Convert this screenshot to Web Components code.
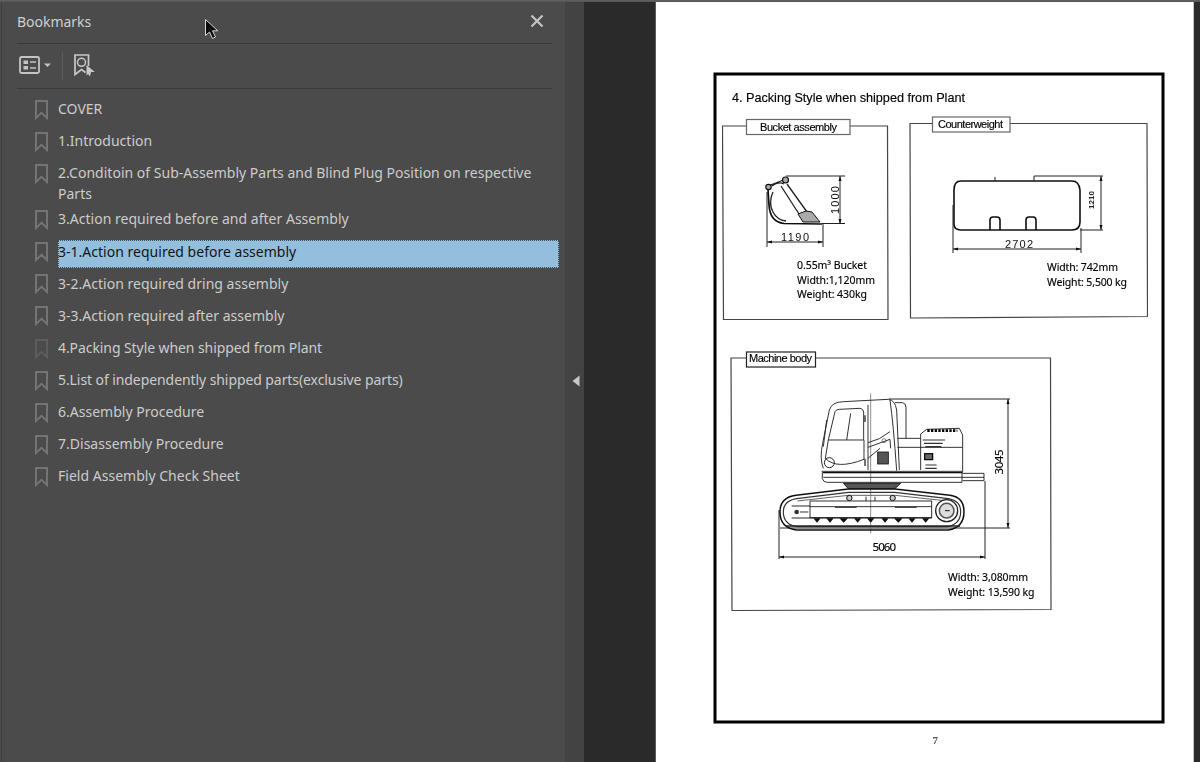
<!DOCTYPE html>
<html><head><meta charset="utf-8"><title>Bookmarks</title>
<style>
html,body{margin:0;height:762px;overflow:hidden;background:#2a2a2a}
</style></head><body>
<pdf-app>
  <bookmarks-panel slot="panel">
    <bookmark-item>COVER</bookmark-item>
    <bookmark-item>1.Introduction</bookmark-item>
    <bookmark-item wrapped>2.Conditoin of Sub-Assembly Parts and Blind Plug Position on respective Parts</bookmark-item>
    <bookmark-item>3.Action required before and after Assembly</bookmark-item>
    <bookmark-item selected>3-1.Action required before assembly</bookmark-item>
    <bookmark-item>3-2.Action required dring assembly</bookmark-item>
    <bookmark-item>3-3.Action required after assembly</bookmark-item>
    <bookmark-item dim style="letter-spacing:-.08px">4.Packing Style when shipped from Plant</bookmark-item>
    <bookmark-item style="letter-spacing:-.08px">5.List of independently shipped parts(exclusive parts)</bookmark-item>
    <bookmark-item>6.Assembly Procedure</bookmark-item>
    <bookmark-item>7.Disassembly Procedure</bookmark-item>
    <bookmark-item>Field Assembly Check Sheet</bookmark-item>
  </bookmarks-panel>
  <panel-splitter slot="splitter"></panel-splitter>
  <doc-viewport slot="viewport"><scan-page></scan-page></doc-viewport>
  <mouse-cursor slot="cursor"></mouse-cursor>
</pdf-app>
<script>
function def(name, html){
  customElements.define(name, class extends HTMLElement{
    constructor(){super();this.attachShadow({mode:'open'}).innerHTML=html;}
  });
}
def('pdf-app',`<style>
:host{display:grid;grid-template-columns:565px 19px 1fr;width:1200px;height:762px;position:relative;background:#2a2a2a;box-sizing:border-box;font-family:"Noto Sans","Open Sans",sans-serif}
.top{position:absolute;left:0;right:0;top:0;height:2px;background:linear-gradient(#626262,#555)}
</style><slot name="panel"></slot><slot name="splitter"></slot><slot name="viewport"></slot><slot name="cursor"></slot><div class="top"></div>`);

def('bookmarks-panel',`<style>
:host{display:flex;flex-direction:column;height:762px;box-sizing:border-box;padding:1px 13px 0 18px;min-width:0;background:linear-gradient(90deg,#4b4b4b 1px,#3f3f3f 1px,#3f3f3f 2px,#4b4b4b 2px)}
header{height:42px;display:flex;align-items:center;justify-content:space-between;border-bottom:1px solid #3a3a3a;font-size:14px;color:#cfcfcf;margin-left:-1px}
header span{padding-bottom:1px;letter-spacing:-.03px}
header svg{margin:0 8px 3px 0;display:block}
.tools{height:44px;display:flex;align-items:center;border-bottom:1px solid #3a3a3a;margin-left:-1px}
.sep{width:1px;height:28px;background:#5c5c5c;margin:0 9.500px 0 9px}
ul{list-style:none;margin:0;padding:6px 0 0 0;display:block}
</style>
<header><span>Bookmarks</span>
<svg width="14" height="14" viewBox="0 0 14 14"><path d="M1.500 1.500 12.500 12.500M12.500 1.500 1.500 12.500" stroke="#c4c4c4" stroke-width="2.200" fill="none"/></svg></header>
<div class="tools">
<svg width="35" height="22" viewBox="0 0 35 22" style="margin:0 0 3px 1px;display:block">
<rect x="2" y="3" width="19" height="16" rx="1.500" fill="none" stroke="#c4c4c4" stroke-width="1.800"/>
<rect x="5.500" y="6.500" width="4.500" height="3.500" fill="#c4c4c4"/><rect x="5.500" y="12" width="4.500" height="3.500" fill="#c4c4c4"/>
<path d="M12 8h6M12 14h6" stroke="#c4c4c4" stroke-width="1.600"/>
<path d="M26 9.500h7l-3.500 3.500z" fill="#c4c4c4"/></svg>
<span class="sep"></span>
<svg width="24" height="26" viewBox="0 0 24 26" style="display:block">
<path d="M15.500 13V2H2V21.500L8.500 16.500 12.500 19.500" fill="none" stroke="#c8c8c8" stroke-width="1.700"/>
<circle cx="8.500" cy="9.300" r="4" fill="none" stroke="#c8c8c8" stroke-width="1.500"/>
<path d="M13.500 12 21.800 19H18L17 23.500 15 21 13.500 22.500Z" fill="#c8c8c8"/></svg>
</div>
<ul><slot></slot></ul>`);

def('bookmark-item',`<style>
:host{display:flex;align-items:flex-start;padding:2px 0;color:#cbcbcb;font-size:14px;line-height:21px;letter-spacing:.015px}
:host([wrapped]){margin-bottom:-.3px}
.ic{flex:none;width:13px;margin:2.500px 10px 0 17px;display:block}
.t{flex:1;min-width:0;height:28.100px;padding:.8px 0 6.300px;box-sizing:border-box;margin-right:-7px;outline-offset:-1px}
:host([wrapped]) .t{height:auto;padding-bottom:0}
:host([selected]) .t{background:#94bfdc;color:#141414;outline:1px dotted #3d4c57}
:host([dim]) path{stroke:#5d5d5d}
</style>
<svg class="ic" width="13" height="20" viewBox="0 0 13 20"><path d="M1 1H12V18L6.500 12.800 1 18Z" fill="none" stroke="#747474" stroke-width="2"/></svg>
<span class="t"><slot></slot></span>`);

def('panel-splitter',`<style>
:host{display:flex;align-items:center;justify-content:center;background:#434343;height:762px}
svg{display:block;margin-left:2px}
</style><svg width="8" height="12" viewBox="0 0 8 12"><path d="M7.500 0.500V11.500L0.500 6Z" fill="#c8c8c8"/></svg>`);

def('doc-viewport',`<style>
:host{display:flex;height:762px;padding-left:72px;box-sizing:border-box;background:#2a2a2a;min-width:0}
</style><slot></slot>`);

def('scan-page',`<style>
:host{display:block;width:537px;height:762px;background:#fff;box-shadow:-1px 0 0 #5a5a5a,1px 0 0 #c4c4c4}
svg{display:block;font-family:"Liberation Sans",sans-serif}
.box{fill:none;stroke:#444;stroke-width:1.200}
.lab{fill:#fff;stroke:#666;stroke-width:1.200}
.lt{font-size:11px;fill:#000;stroke:#000;stroke-width:.15}
.cal{font-family:"Noto Sans",sans-serif;font-size:10.500px;fill:#000;stroke:#000;stroke-width:.15}
.dim{font-size:11px;fill:#111}
.ln{fill:none;stroke:#222;stroke-width:1}
.dk{fill:none;stroke:#111;stroke-width:3.500}
.th{fill:none;stroke:#222;stroke-width:2.800}
.fth{fill:none;stroke:#666;stroke-width:2.200}
</style>
<svg width="538" height="762" viewBox="656 0 538 762">
<defs><filter id="soft" x="0" y="0" width="100%" height="100%" filterUnits="objectBoundingBox"><feGaussianBlur stdDeviation=".55"/></filter></defs>
<rect x="715" y="74" width="448" height="648" fill="none" stroke="#000" stroke-width="3"/>
<g filter="url(#soft)">
<text x="732" y="102" font-size="12.700" fill="#000" stroke="#000" stroke-width=".15" textLength="233">4. Packing Style when shipped from Plant</text>

<!-- bucket -->
<path class="box" d="M722.500 126H887.500L888 319.500H723.500Z"/>
<rect class="lab" x="746.500" y="119.500" width="103.500" height="15"/>
<text class="lt" x="760" y="131" textLength="77">Bucket assembly</text>
<path class="ln" d="M786 176H845M822 223.500H845M840 176V224M767 247V192M823 223V247M767 242H823"/>
<path d="M767 242l5 -1.500v3zM823 242l-5 -1.500v3zM840 176l-1.500 5h3zM840 224l-1.500 -5h3z" fill="#111"/>
<path d="M768 190 L769 205Q770 222 784 223.500L822 224" fill="none" stroke="#111" stroke-width="1.700"/>
<path d="M768 186 L786 179M773 192Q768 203 773 212Q777 220 786 221M787 184 L807 212M781 186 L799 214M772 186Q778 181 784 184" fill="none" stroke="#222" stroke-width="1.300"/>
<circle cx="768.500" cy="187" r="2.700" fill="#aaa" stroke="#111" stroke-width="1.200"/><circle cx="785.500" cy="180" r="3" fill="#aaa" stroke="#111" stroke-width="1.200"/>
<path d="M798 214 806 211 812 212 820 222 803 222Z" fill="#aaa" stroke="#111" stroke-width="1"/>
<text class="dim" transform="translate(838.500 200) rotate(-90)" text-anchor="middle" textLength="28">1000</text>
<text class="dim" x="781" y="241" textLength="28">1190</text>
<text class="cal" x="797" y="269" textLength="70">0.55m³ Bucket</text>
<text class="cal" x="797" y="284" textLength="78">Width:1,120mm</text>
<text class="cal" x="797" y="298" textLength="70">Weight: 430kg</text>

<!-- counterweight -->
<path class="box" d="M910 123.500H1147L1147.500 316.500 910.500 318Z"/>
<rect class="lab" x="932.500" y="117" width="77.500" height="15"/>
<text class="lt" x="938" y="127.500" textLength="65">Counterweight</text>
<path d="M961 181H1072Q1079 181 1080 190V222Q1080 230 1072 230H961Q954 230 954 224V190Q954 181 961 181Z" fill="none" stroke="#111" stroke-width="1.600"/>
<path d="M990 230V220Q990 217 993 217H997Q1000 217 1000 220V230M1026 230V220Q1026 217 1029 217H1033Q1036 217 1036 220V230" fill="none" stroke="#111" stroke-width="1.600"/>
<path class="ln" d="M1034 181V176H1103M1080 230H1103M1101 176V230M953 205V253M1081 228V253M953 249H1081M995 177V181"/>
<path d="M953 249l5 -1.500v3zM1081 249l-5 -1.500v3zM1101 176l-1.500 5h3zM1101 230l-1.500 -5h3z" fill="#111"/>
<text transform="translate(1094 200) rotate(-90)" text-anchor="middle" font-size="8" font-weight="700" fill="#222">1210</text>
<text class="dim" x="1005" y="248" textLength="28">2702</text>
<text class="cal" x="1047" y="271" textLength="71">Width: 742mm</text>
<text class="cal" x="1047" y="285.500" textLength="80">Weight: 5,500 kg</text>

<!-- machine body -->
<path class="box" d="M731 358H1050.500L1051 609.500 732 610.500Z"/>
<rect x="746.500" y="352" width="69" height="15" fill="#fff" stroke="#222" stroke-width="1.200"/>
<text class="lt" x="749" y="361.500" textLength="63">Machine body</text>
<path class="ln" d="M889 399H1010M780 528H1010M1008 399V528M985 481V559M779 510V559M779 557H985"/>
<path d="M779 557l5 -1.500v3zM985 557l-5 -1.500v3zM1008 399l-1.500 5h3zM1008 528l-1.500 -5h3z" fill="#111"/>
<text transform="translate(1002.500 462) rotate(-90)" text-anchor="middle" class="cal" style="font-size:11.500px" textLength="25">3045</text>
<text class="cal" x="872.500" y="551" style="font-size:11.500px" textLength="23.500">5060</text>
<text class="cal" x="948" y="581" textLength="80">Width: 3,080mm</text>
<text class="cal" x="948" y="596" textLength="86.500">Weight: 13,590 kg</text>

<g transform="translate(780 390) scale(.33333)">
  <path class="fth" d="M272 10V430"/>
  <!-- cab -->
  <path class="th" d="M130 235Q118 205 128 160L148 60Q155 36 190 35L325 28Q345 30 350 60L358 240"/>
  <path class="th" d="M345 38H368Q378 40 378 52V145"/>
  <path class="th" d="M140 90 130 170M165 65Q168 58 178 58L240 55Q250 56 251 66V150H145ZM212 70 200 150"/>
  <path class="th" d="M145 150 136 205Q170 240 252 208V150M264 45V240M330 30Q340 100 350 242"/>
  <circle cx="148" cy="218" r="15" fill="none" stroke="#222" stroke-width="3"/>
  <path class="dk" d="M255 76V96M255 206V228"/>
  <path class="th" d="M264 158Q300 150 330 125M264 172 330 148 332 175M264 205 300 175"/>
  <rect x="293" y="186" width="32" height="36" fill="#555" stroke="#111" stroke-width="2.500"/>
  <circle cx="312" cy="152" r="6" fill="none" stroke="#444" stroke-width="2"/>
  <!-- engine -->
  <path class="th" d="M352 145H422M352 172H548M422 240V132L440 118 538 115 548 135V245"/>
  <path d="M442 122H532" stroke="#000" stroke-width="8" stroke-dasharray="7 4" fill="none"/>
  <path d="M428 150H495M432 160H488M436 170H484M436 225H470M436 235H470" stroke="#333" stroke-width="3.500" fill="none"/>
  <rect x="434" y="191" width="24" height="18" fill="#666" stroke="#000" stroke-width="3.500"/>
  <!-- deck -->
  <path class="th" d="M125 244H548"/>
  <path d="M128 248H548" stroke="#111" stroke-width="3.500"/>
  <path class="th" d="M127 247V266Q130 277 142 277H546V248"/>
  <path class="th" d="M130 262H612M548 250H612V272H548"/>
  <!-- swing -->
  <path d="M190 280H362L345 296H205Z" fill="#555" stroke="#111" stroke-width="2.500"/>
  <!-- track -->
  <path d="M48 316 205 297H345L510 316Q552 322 552 365Q552 412 505 420H50Q0 414 0 366Q0 322 48 316Z" fill="none" stroke="#111" stroke-width="4.500"/>
  <path d="M50 326 205 307H345L505 326Q542 332 542 365Q542 402 502 410H52Q10 404 10 366Q10 332 50 326Z" fill="none" stroke="#333" stroke-width="3.500"/>
  <path d="M52 333 205 316H345L503 333" fill="none" stroke="#444" stroke-width="2.500"/>
  <rect x="90" y="333" width="365" height="50" fill="none" stroke="#222" stroke-width="2.800"/>
  <path class="th" d="M90 350H455M165 352H230M345 352H410M258 320V333M285 320V333"/>
  <path class="dk" d="M35 348H90M35 384H90M90 384H455" style="stroke-width:2.800"/>
  <circle cx="50" cy="366" r="7" fill="#333"/><path class="th" d="M60 366H85"/>
  <circle cx="500" cy="362" r="33" fill="#fff" stroke="#222" stroke-width="4"/>
  <circle cx="500" cy="362" r="22" fill="#ddd" stroke="#555" stroke-width="4.500"/>
  <path d="M495 362h14" stroke="#111" stroke-width="3"/>
  <g fill="#ccc" stroke="#111" stroke-width="3">
    <circle cx="208" cy="324" r="8"/><circle cx="338" cy="324" r="8"/>
  </g>
  <g fill="#111">
    <path d="M100 385h22l-11 13zM139 385h22l-11 13zM178 385h26l-13 13zM222 385h22l-11 13zM261 385h22l-11 13zM304 385h22l-11 13zM342 385h26l-13 13zM385 385h22l-11 13zM426 385h22l-11 13z"/>
  </g>
  <path d="M18 408H540" stroke="#222" stroke-width="4"/>
</g>
<text x="932.500" y="744" font-size="11" font-weight="700" fill="#555" style="font-family:'Liberation Serif',serif">7</text>
</g>
</svg>`);

def('mouse-cursor',`<style>
:host{position:absolute;left:204px;top:18px;width:16px;height:22px;display:block}
svg{display:block}
</style><svg width="16" height="22" viewBox="0 0 16 22"><path d="M1.500 1.500V17.500L5.500 14 8.500 20.500 11.500 19 8.500 12.800H13.800Z" fill="#0a0a0a" stroke="#d8d8d8" stroke-width="1"/></svg>`);
</script>
</body></html>
